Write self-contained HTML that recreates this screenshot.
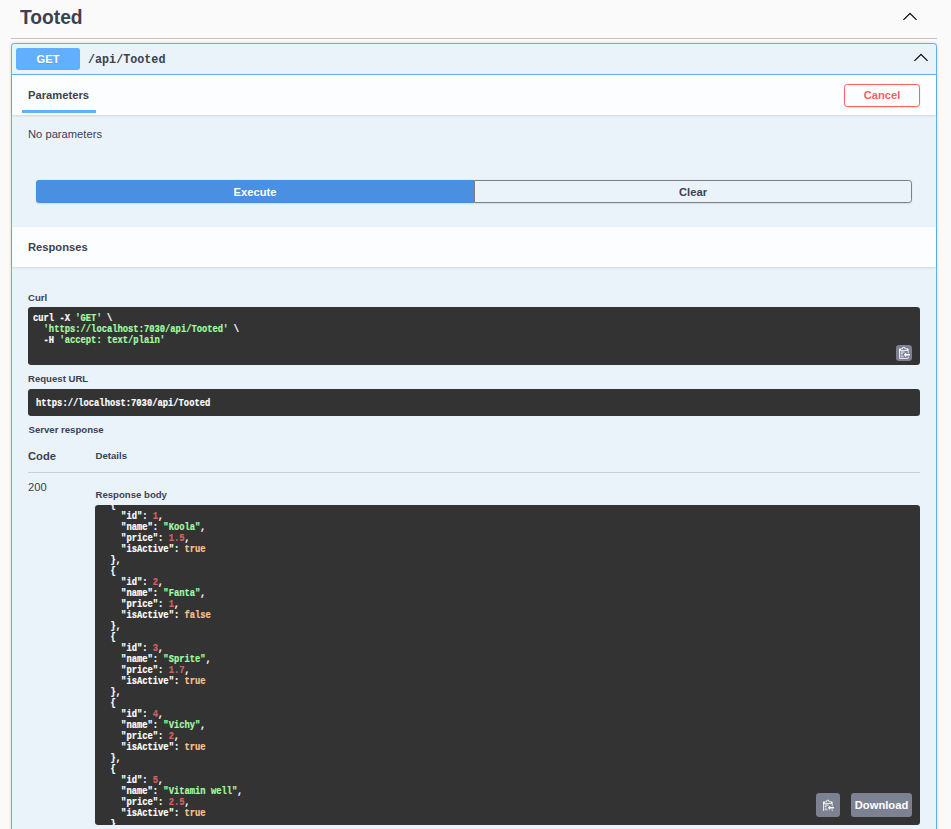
<!DOCTYPE html>
<html><head><meta charset="utf-8">
<style>
html,body{margin:0;padding:0;}
body{width:951px;height:829px;overflow:hidden;background:#fafafa;position:relative;font-family:"Liberation Sans",sans-serif;color:#3b4151;}
.a{position:absolute;}
.t{position:absolute;white-space:pre;line-height:1;}
.b{font-weight:bold;}
.s11{font-size:11.2px;}
.s9{font-size:9.6px;}
.mono{font-family:"Liberation Mono",monospace;font-weight:bold;}
.code{font-family:"Liberation Mono",monospace;font-weight:bold;font-size:10px;line-height:11px;color:#fff;white-space:pre;transform:scaleX(0.88);transform-origin:0 0;-webkit-text-stroke:0.2px currentColor;}
.str{color:#a2fca2;}
.num{color:#d36363;}
.lit{color:#fcc28c;}
.hdr{left:12px;width:924px;height:40px;background:rgba(255,255,255,.8);box-shadow:0 1px 2px rgba(0,0,0,.12);}
.dark{background:#333;border-radius:3.2px;}
.cp{background:#7d8293;border-radius:3.2px;}
</style></head>
<body>
<!-- tag header -->
<div class="t b" style="left:20px;top:7.7px;font-size:19.2px;transform:scaleY(1.075);transform-origin:0 16.3px">Tooted</div>
<svg class="a" style="left:902px;top:8px" width="16" height="16" viewBox="0 0 20 20"><path fill="#000" d="M17.418 14.908c.272.268.709.268.979 0s.271-.701 0-.969l-7.908-7.83c-.27-.268-.707-.268-.979 0l-7.908 7.83c-.27.268-.27.701 0 .969.271.268.709.268.979 0L10 7.767l7.418 7.141z"/></svg>
<div class="a" style="left:11px;top:38px;width:926px;height:1px;background:#c1c3c7"></div>

<!-- opblock -->
<div class="a" style="left:11px;top:43px;width:924px;height:800px;border:1px solid #61affe;border-radius:3.2px;background:#ebf3fa;box-shadow:0 0 2.4px rgba(0,0,0,.19)"></div>
<div class="a" style="left:12px;top:74px;width:924px;height:1px;background:#61affe"></div>
<div class="a" style="left:16px;top:48px;width:64px;height:22px;background:#61affe;border-radius:2.4px"></div>
<div class="t b s11" style="left:16px;width:64px;text-align:center;top:54px;color:#fff;text-shadow:0 0.8px 0 rgba(0,0,0,.1)">GET</div>
<div class="t" style="font-family:'Liberation Mono',monospace;font-weight:bold;left:87.5px;top:53.3px;font-size:13px;transform:scaleX(0.9026);transform-origin:0 0">/api/Tooted</div>
<svg class="a" style="left:913px;top:49px" width="16" height="16" viewBox="0 0 20 20"><path fill="#000" d="M17.418 14.908c.272.268.709.268.979 0s.271-.701 0-.969l-7.908-7.83c-.27-.268-.707-.268-.979 0l-7.908 7.83c-.27.268-.27.701 0 .969.271.268.709.268.979 0L10 7.767l7.418 7.141z"/></svg>

<!-- Parameters header -->
<div class="a hdr" style="top:75px"></div>
<div class="t b s11" style="left:28px;top:89.7px">Parameters</div>
<div class="a" style="left:22px;top:110px;width:74px;height:3px;background:#61affe"></div>
<div class="a" style="box-sizing:border-box;left:844px;top:84px;width:76px;height:23px;border:1px solid #ff6060;border-radius:3.2px;box-shadow:0 0.8px 1.6px rgba(0,0,0,.1)"></div>
<div class="t b s11" style="left:844px;width:76px;text-align:center;top:89.5px;color:#ff6060">Cancel</div>

<div class="t s11" style="left:28px;top:129.4px">No parameters</div>

<!-- execute / clear -->
<div class="a" style="left:36px;top:180px;width:438px;height:23px;background:#4990e2;border-radius:3.2px 0 0 3.2px;box-shadow:0 0.8px 1.6px rgba(0,0,0,.1)"></div>
<div class="t b s11" style="left:36px;width:438px;text-align:center;top:186.5px;color:#fff">Execute</div>
<div class="a" style="box-sizing:border-box;left:474px;top:180px;width:438px;height:23px;border:1px solid #808080;border-radius:0 3.2px 3.2px 0;box-shadow:0 0.8px 1.6px rgba(0,0,0,.1)"></div>
<div class="t b s11" style="left:474px;width:438px;text-align:center;top:186.5px">Clear</div>

<!-- Responses header -->
<div class="a hdr" style="top:227px"></div>
<div class="t b s11" style="left:28px;top:242.3px">Responses</div>

<!-- Curl -->
<div class="t b s9" style="left:28px;top:292.9px">Curl</div>
<div class="a dark" style="left:28px;top:307px;width:892px;height:58px"></div>
<div class="a code" style="left:32.8px;top:312.8px">curl -X <span class="str">'GET'</span> \
  <span class="str">'https://localhost:7030/api/Tooted'</span> \
  -H <span class="str">'accept: text/plain'</span></div>
<div class="a cp" style="left:896px;top:345px;width:16px;height:16px"></div>
<svg class="a" style="left:899px;top:346px" width="11.2" height="12.8" viewBox="0 0 14 16"><path fill="#fff" fill-rule="evenodd" d="M2 13h4v1H2v-1zm5-6H2v1h5V7zm2 3V8l-3 3 3 3v-2h5v-2H9zM4.5 9H2v1h2.5V9zM2 12h2.5v-1H2v1zm9 1h1v2c-.02.28-.11.52-.3.7-.19.18-.42.28-.7.3H1c-.55 0-1-.45-1-1V4c0-.55.45-1 1-1h3c0-1.11.89-2 2-2 1.11 0 2 .89 2 2h3c.55 0 1 .45 1 1v5h-1V6H1v9h10v-2zM2 5h8c0-.55-.45-1-1-1H8c-.55 0-1-.45-1-1 0-.55-.45-1-1-1-.55 0-1 .45-1 1 0 .55-.45 1-1 1H3c-.55 0-1 .45-1 1z"/></svg>

<!-- Request URL -->
<div class="t b s9" style="left:28px;top:373.8px">Request URL</div>
<div class="a dark" style="left:28px;top:389px;width:892px;height:27px"></div>
<div class="a code" style="left:36px;top:397.5px">https://localhost:7030/api/Tooted</div>

<div class="t b s9" style="left:28.5px;top:424.9px">Server response</div>

<!-- table -->
<div class="t b s11" style="left:28px;top:450.5px">Code</div>
<div class="t b s9" style="left:95.5px;top:451.2px">Details</div>
<div class="a" style="left:28px;top:472px;width:892px;height:1px;background:#c8cfd8"></div>
<div class="t s11" style="left:28px;top:482.1px">200</div>
<div class="t b s9" style="left:95.5px;top:489.9px">Response body</div>

<div class="a dark" style="left:95px;top:505px;width:825px;height:320px;overflow:hidden">
<div class="a code" style="left:4.8px;top:-16px">[
  {
    "id": <span class="num">1</span>,
    "name": <span class="str">"Koola"</span>,
    "price": <span class="num">1.5</span>,
    "isActive": <span class="lit">true</span>
  },
  {
    "id": <span class="num">2</span>,
    "name": <span class="str">"Fanta"</span>,
    "price": <span class="num">1</span>,
    "isActive": <span class="lit">false</span>
  },
  {
    "id": <span class="num">3</span>,
    "name": <span class="str">"Sprite"</span>,
    "price": <span class="num">1.7</span>,
    "isActive": <span class="lit">true</span>
  },
  {
    "id": <span class="num">4</span>,
    "name": <span class="str">"Vichy"</span>,
    "price": <span class="num">2</span>,
    "isActive": <span class="lit">true</span>
  },
  {
    "id": <span class="num">5</span>,
    "name": <span class="str">"Vitamin well"</span>,
    "price": <span class="num">2.5</span>,
    "isActive": <span class="lit">true</span>
  }
]</div>
<div class="a cp" style="left:721px;top:288px;width:24px;height:24px"></div>
<svg class="a" style="left:727.6px;top:293.6px" width="11.2" height="12.8" viewBox="0 0 14 16"><path fill="#fff" fill-rule="evenodd" d="M2 13h4v1H2v-1zm5-6H2v1h5V7zm2 3V8l-3 3 3 3v-2h5v-2H9zM4.5 9H2v1h2.5V9zM2 12h2.5v-1H2v1zm9 1h1v2c-.02.28-.11.52-.3.7-.19.18-.42.28-.7.3H1c-.55 0-1-.45-1-1V4c0-.55.45-1 1-1h3c0-1.11.89-2 2-2 1.11 0 2 .89 2 2h3c.55 0 1 .45 1 1v5h-1V6H1v9h10v-2zM2 5h8c0-.55-.45-1-1-1H8c-.55 0-1-.45-1-1 0-.55-.45-1-1-1-.55 0-1 .45-1 1 0 .55-.45 1-1 1H3c-.55 0-1 .45-1 1z"/></svg>
<div class="a cp" style="left:756px;top:288px;width:61px;height:24px"></div>
<div class="t b s11" style="left:756px;width:61px;text-align:center;top:294.5px;color:#fff">Download</div>
</div>
</body></html>
